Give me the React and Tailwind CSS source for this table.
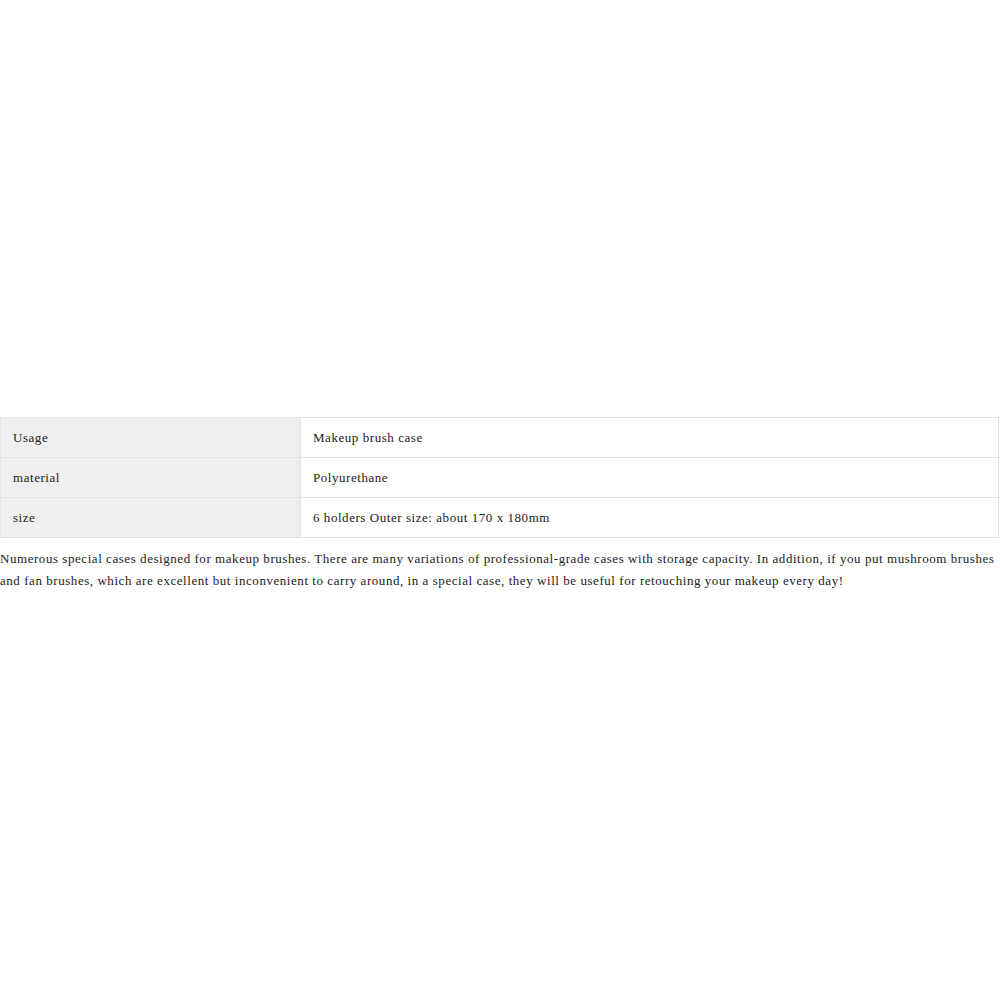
export default function App() {
  const rows = [
    ["Usage", "Makeup brush case"],
    ["material", "Polyurethane"],
    ["size", "6 holders Outer size: about 170 x 180mm"],
  ];
  return (
    <div className="w-[1000px] h-[1000px] bg-white text-[#222] text-[13px] tracking-[0.55px]" style={{ fontFamily: '"Liberation Serif", "Noto Sans CJK KR", serif' }}>
      <div className="h-[417px]" />
      <div className="w-[999px] border border-[#e3e3e3]">
        {rows.map(([k, v], i) => (
          <div key={i} className={`flex ${i > 0 ? "h-[40px] border-t border-[#e3e3e3]" : "h-[39px]"}`}>
            <div className="w-[300px] bg-[#efefef] border-r border-[#e3e3e3] px-[12px] flex items-center">{k}</div>
            <div className="flex-1 px-[12px] flex items-center">{v}</div>
          </div>
        ))}
      </div>
      <p className="mt-[10px] leading-[22px] pr-[2px]">
        Numerous special cases designed for makeup brushes. There are many variations of professional-grade cases with storage capacity. In addition, if you put mushroom brushes and fan brushes, which are excellent but inconvenient to carry around, in a special case, they will be useful for retouching your makeup every day!
      </p>
    </div>
  );
}
